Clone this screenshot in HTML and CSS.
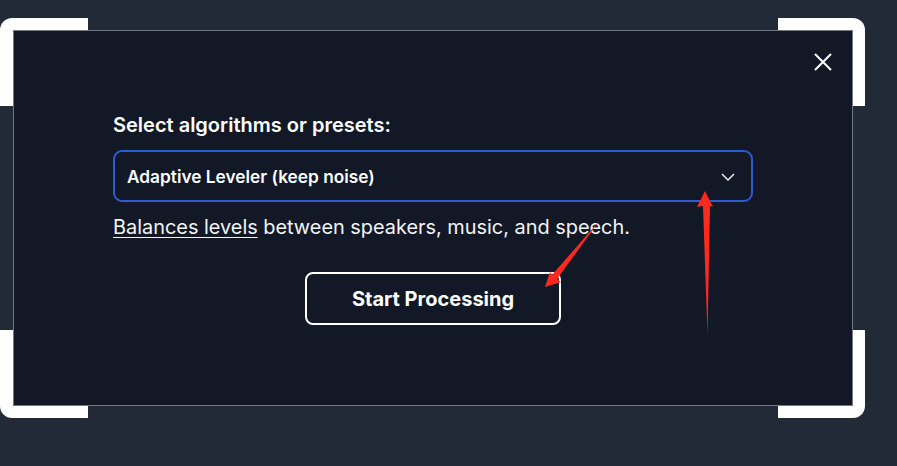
FILE: index.html
```html
<!DOCTYPE html>
<html lang="en">
<head>
<meta charset="utf-8">
<title>Select algorithms</title>
<link rel="stylesheet" href="styles.css">
</head>
<body>
<div class="stage">
  <div class="frame">
    <span class="corner tl"></span>
    <span class="corner tr"></span>
    <span class="corner bl"></span>
    <span class="corner br"></span>
    <div class="dialog">
      <button class="close" aria-label="Close">
        <svg width="18" height="18" viewBox="0 0 18 18"><path d="M1 1L17 17M17 1L1 17" stroke="#ffffff" stroke-width="2" fill="none"/></svg>
      </button>
      <div class="content">
        <div class="label">Select algorithms or presets:</div>
        <div class="select">
          <span class="select-text">Adaptive Leveler (keep noise)</span>
          <svg class="chevron" width="14" height="8" viewBox="0 0 14 8"><path d="M1 1L7 7L13 1" stroke="#e5e7eb" stroke-width="1.5" fill="none"/></svg>
        </div>
        <p class="desc"><span class="link">Balances levels</span> between speakers, music, and speech.</p>
        <div class="actions">
          <button class="start">Start Processing</button>
        </div>
      </div>
    </div>
  </div>
  <svg class="annot" width="897" height="466" viewBox="0 0 897 466">
    <path d="M705 191 L713 207 L710 206 L707.5 335 L703 206 L697 207 Z" fill="#ff2a1f"/>
    <path d="M545 287 L550 272 L552 275 L600 220 L557 279 L561 282 Z" fill="#ff2a1f"/>
  </svg>
</div>
</body>
</html>
```
FILE: styles.css
```css
* { box-sizing: border-box; }
html, body { margin: 0; padding: 0; }
body {
  background: #222a38;
  font-family: Inter, "Noto Sans", "Liberation Sans", sans-serif;
  color: #ffffff;
  width: 897px;
  height: 466px;
  overflow: hidden;
}
.stage {
  position: relative;
  width: 897px;
  height: 466px;
  padding-top: 18px;
}
.frame {
  position: relative;
  width: 865px;
  height: 400px;
  padding: 12px 12px 12px 13px;
}
.corner {
  position: absolute;
  width: 88px;
  height: 88px;
  background: #ffffff;
}
.corner.tl { left: 0; top: 0; border-top-left-radius: 12px; }
.corner.tr { right: 0; top: 0; border-top-right-radius: 12px; width: 87px; }
.corner.bl { left: 0; bottom: 0; border-bottom-left-radius: 12px; }
.corner.br { right: 0; bottom: 0; border-bottom-right-radius: 12px; width: 87px; }
.dialog {
  position: relative;
  width: 840px;
  height: 376px;
  background: #121826;
  border: 1px solid rgba(255, 255, 255, 0.42);
  padding: 82px 99px 0 99px;
}
.close {
  position: absolute;
  top: 22px;
  right: 20px;
  width: 18px;
  height: 18px;
  padding: 0;
  border: 0;
  background: transparent;
  display: flex;
}
.content {
  display: flex;
  flex-direction: column;
}
.label {
  font-size: 20px;
  font-weight: 600;
  line-height: 24px;
  margin-bottom: 13px;
}
.select {
  height: 52px;
  border: 2px solid #2d5bd3;
  border-radius: 9px;
  display: flex;
  align-items: center;
  justify-content: space-between;
  padding: 0 16px 0 12px;
}
.select-text {
  font-size: 17.3px;
  font-weight: 600;
}
.chevron { margin-top: 1px; }
.desc {
  margin: 12px 0 0 0;
  font-size: 19.9px;
  line-height: 26px;
  color: #f3f4f6;
}
.link { text-decoration: underline; text-underline-offset: 3px; }
.actions {
  display: flex;
  justify-content: center;
  margin-top: 32px;
}
.start {
  width: 256px;
  height: 53px;
  background: transparent;
  border: 2px solid #ffffff;
  border-radius: 8px;
  color: #ffffff;
  font-family: inherit;
  font-size: 20px;
  font-weight: 700;
}
.annot {
  position: absolute;
  left: 0;
  top: 0;
  pointer-events: none;
}
```
